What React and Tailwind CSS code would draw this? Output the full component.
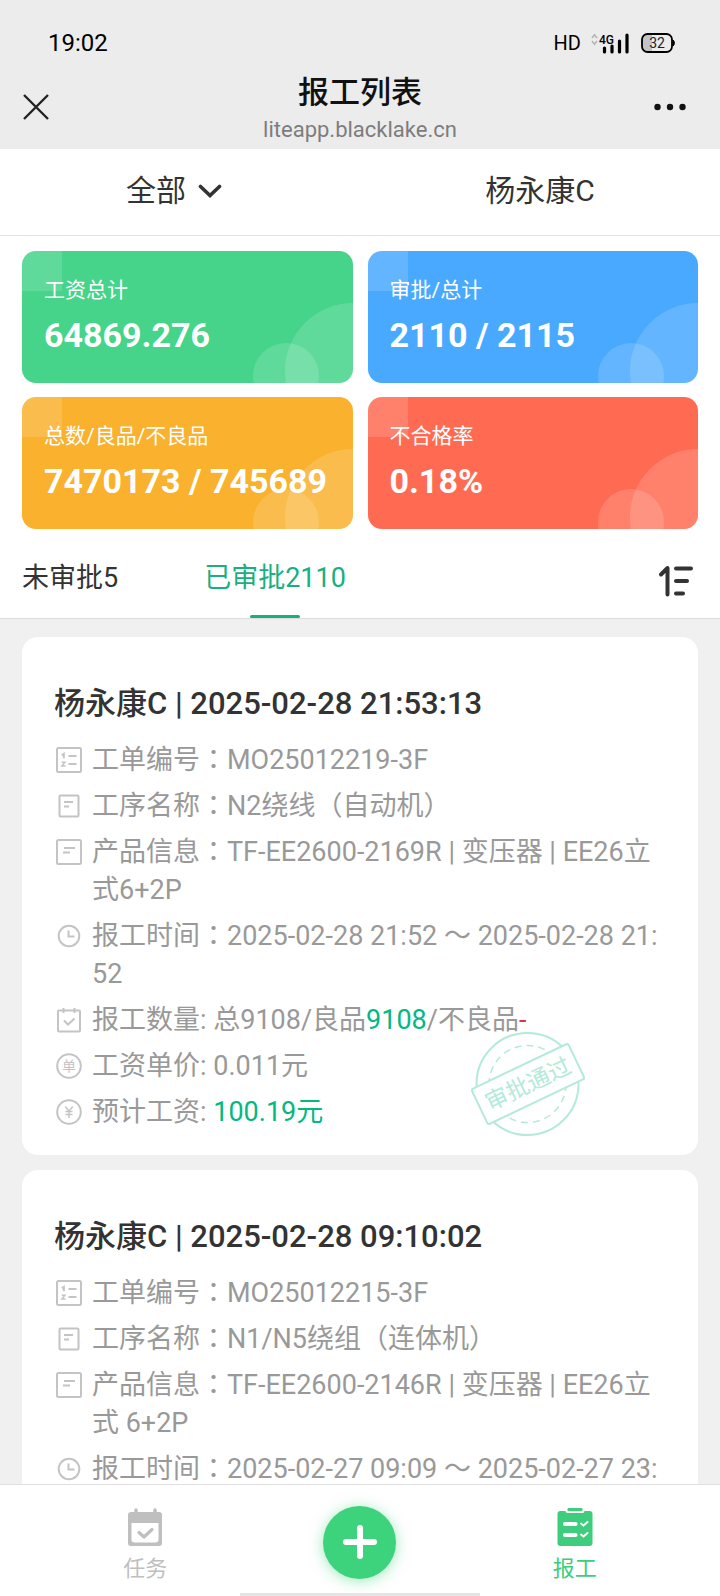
import React, { useState } from 'react';

const stats = [
  { label: '工资总计', value: '64869.276', color: 'bg-[#45d48a]' },
  { label: '审批/总计', value: '2110 / 2115', color: 'bg-[#48a9ff]' },
  { label: '总数/良品/不良品', value: '7470173 / 745689', color: 'bg-[#fab12d]' },
  { label: '不合格率', value: '0.18%', color: 'bg-[#ff6b52]' },
];

const tabs = [
  { id: 'pending', label: '未审批5' },
  { id: 'approved', label: '已审批2110' },
];

const reports = [
  {
    title: '杨永康C | 2025-02-28 21:53:13',
    order: 'MO25012219-3F',
    process: 'N2绕线（自动机）',
    product: 'TF-EE2600-2169R | 变压器 | EE26立式6+2P',
    time: '2025-02-28 21:52 ～ 2025-02-28 21:52',
    total: '9108',
    good: '9108',
    bad: '-',
    price: '0.011元',
    wage: '100.19元',
    approved: true,
  },
  {
    title: '杨永康C | 2025-02-28 09:10:02',
    order: 'MO25012215-3F',
    process: 'N1/N5绕组（连体机）',
    product: 'TF-EE2600-2146R | 变压器 | EE26立式 6+2P',
    time: '2025-02-27 09:09 ～ 2025-02-27 23:',
  },
];

// 26x26 line icons shown in front of each row
const rowIcons = {
  order: (
    <>
      <rect x="1" y="1" width="24" height="24" rx="1.5" strokeWidth="2" />
      <path d="M5.8 8.2 7.8 6.8v4.4M12.5 9h8M12.5 17h8" strokeWidth="2" />
      <path d="M5.8 15.2h3.2l-3.200 3.8h3.8" strokeWidth="1.4" />
    </>
  ),
  process: (
    <>
      <rect x="3.5" y="2.5" width="19" height="21" rx="1" strokeWidth="2" />
      <path d="M8 9h9M8 13.5h5" strokeWidth="2" />
    </>
  ),
  product: (
    <>
      <rect x="1" y="1" width="24" height="24" rx="1.5" strokeWidth="2" />
      <path d="M8 9h11M7 13.5h7" strokeWidth="2" />
    </>
  ),
  time: (
    <>
      <circle cx="13" cy="13" r="10.3" strokeWidth="2" />
      <path d="M12.5 7.5v6h6" strokeWidth="2" />
    </>
  ),
  count: (
    <>
      <rect x="2" y="3.5" width="22" height="21" rx="1" strokeWidth="2" />
      <path d="M7.5 1v5M18.5 1v5M8 13.5l4 4 6.5-6" strokeWidth="2" />
    </>
  ),
  price: (
    <>
      <circle cx="13" cy="13" r="11.8" strokeWidth="2" />
      <text x="13" y="18" fontSize="14" textAnchor="middle" fill="currentColor" stroke="none">单</text>
    </>
  ),
  wage: (
    <>
      <circle cx="13" cy="13" r="11.8" strokeWidth="2" />
      <path d="M9.2 7.5 13 12l3.8-4.5M13 12v7M9.5 12.5h7M9.5 15.5h7" strokeWidth="1.4" />
    </>
  ),
};

const StatusBar = () => (
  <div className="flex items-center justify-between pt-7 pr-[45px] pl-12 text-black">
    <span className="text-[24px] leading-[30px]">19:02</span>
    <div className="flex items-center">
      <span className="mr-2.5 text-[20px] leading-[30px]">HD</span>
      <svg width="38" height="22" viewBox="0 0 38 22" fill="none">
        <path d="M1 6 3.5 2.8 6 6M1 9 3.5 12.2 6 9" stroke="#b5b5b5" strokeWidth="1.6" />
        <text x="8" y="12" fontSize="12" fontWeight="500" fill="#000">4G</text>
        <path d="M13.5 16v4M21 14v6M28.5 9v11M36 3v17" stroke="#000" strokeWidth="3.2" strokeLinecap="round" />
      </svg>
      <svg className="ml-3" width="34" height="20" viewBox="0 0 34 20">
        <rect x="1" y="1" width="30" height="18" rx="5.5" fill="#ececec" />
        <path d="M6.5 1H11v18H6.5A5.5 5.5 0 0 1 1 13.5v-7A5.5 5.5 0 0 1 6.5 1z" fill="#c4c4c4" />
        <rect x="1" y="1" width="30" height="18" rx="5.5" fill="none" stroke="#000" strokeWidth="1.8" />
        <path d="M32 7c1.8 1 1.8 5 0 6z" fill="#000" stroke="#000" />
        <text x="16" y="15" fontSize="14" textAnchor="middle" fill="#222">32</text>
      </svg>
    </div>
  </div>
);

const NavBar = () => (
  <div className="flex items-center justify-between px-[22px] pt-3 pb-[5px]">
    <button className="w-12" aria-label="关闭">
      <svg width="28" height="28" viewBox="0 0 28 28" fill="none" stroke="#222" strokeWidth="2.4">
        <path d="M2 2l24 24M26 2 2 26" />
      </svg>
    </button>
    <div className="flex flex-col items-center">
      <h1 className="text-[31px] leading-[46px] font-medium text-[#111]">报工列表</h1>
      <p className="text-[22px] leading-7 text-[#7d7d7d]">liteapp.blacklake.cn</p>
    </div>
    <button className="flex w-12 justify-end" aria-label="更多">
      <svg className="mr-3 shrink-0" width="32" height="8" viewBox="0 0 32 8" fill="#111">
        <circle cx="3.5" cy="4" r="3.2" />
        <circle cx="16" cy="4" r="3.2" />
        <circle cx="28.5" cy="4" r="3.2" />
      </svg>
    </button>
  </div>
);

const StatCard = ({ label, value, color }) => (
  <div className={`relative overflow-hidden rounded-[14px] px-[22px] pt-6 pb-7 text-white ${color}`}>
    <div className="absolute top-0 left-0 h-10 w-10 bg-white/15" />
    <div className="absolute -right-[68px] -bottom-14 h-[136px] w-[136px] rounded-full bg-white/15" />
    <div className="absolute right-[34px] -bottom-[26px] h-[66px] w-[66px] rounded-full bg-white/15" />
    <p className="relative text-[21px] leading-[30px]">{label}</p>
    <p className="relative mt-2.5 text-[34px] leading-10 font-bold whitespace-nowrap">{value}</p>
  </div>
);

// full-width colon centred in its box
const WideColon = () => <span className="font-['Noto_Sans_CJK_TC',sans-serif] leading-none">：</span>;

const Row = ({ icon, children }) => (
  <div className="flex">
    <svg className="mt-1.5 mr-2.5 ml-0.5 shrink-0 text-[#c4c4c4]" width="26" height="26" viewBox="0 0 26 26" fill="none" stroke="currentColor">
      {rowIcons[icon]}
    </svg>
    <p className="min-w-0 flex-1 break-all">{children}</p>
  </div>
);

const Stamp = () => (
  <svg className="absolute right-[113px] bottom-[18px]" width="114" height="106" viewBox="0 0 114 106" fill="none" stroke="#b3ead8">
    <circle cx="56.5" cy="53" r="51" strokeWidth="2" />
    <circle cx="56.5" cy="53" r="38.5" strokeWidth="1.5" strokeDasharray="7 5" />
    <g transform="rotate(-25.5 57 53)">
      <rect x="3.5" y="33.5" width="107" height="39" rx="2" fill="#fff" strokeWidth="2" />
      <text x="57" y="61" fontSize="23" textAnchor="middle" fill="#b3ead8" stroke="none">审批通过</text>
    </g>
  </svg>
);

const ReportCard = ({ report }) => (
  <article className="relative rounded-2xl bg-white pt-[45px] pr-8 pb-6 pl-8">
    <h2 className="text-[31px] leading-[44px] font-medium text-[#333]">{report.title}</h2>
    <div className="mt-[15px] flex flex-col gap-2 text-[27px] leading-[38px] text-[#999]">
      <Row icon="order">工单编号<WideColon />{report.order}</Row>
      <Row icon="process">工序名称<WideColon />{report.process}</Row>
      <Row icon="product">产品信息<WideColon />{report.product}</Row>
      <Row icon="time">报工时间<WideColon />{report.time}</Row>
      {report.total && (
        <Row icon="count">
          报工数量: 总{report.total}/良品<span className="text-[#02b980]">{report.good}</span>/不良品
          <span className="text-[#d9363e]">{report.bad}</span>
        </Row>
      )}
      {report.price && <Row icon="price">工资单价: {report.price}</Row>}
      {report.wage && (
        <Row icon="wage">预计工资: <span className="text-[#02b980]">{report.wage}</span></Row>
      )}
    </div>
    {report.approved && <Stamp />}
  </article>
);

const BottomNav = () => (
  <nav className="relative border-t border-[#e0e0e0] bg-white px-[38px] pt-5 pb-[11px]">
    <div className="grid grid-cols-3 items-center justify-items-center">
      <button className="flex flex-col items-center pt-0.5 text-[22px] leading-8 text-[#bfbfbf]">
        <svg className="mb-1.5" width="36" height="40" viewBox="0 0 36 40" fill="none">
          <path d="M9 3v4M28 3v4" stroke="#bfbfbf" strokeWidth="3.5" strokeLinecap="round" />
          <rect x="1" y="5" width="34" height="34" rx="3" fill="#bfbfbf" />
          <path d="M4.5 16h27v16.500a3 3 0 0 1-3 3h-21a3 3 0 0 1-3-3z" fill="#fff" />
          <path d="M12 25.500l5 4.500 8-7.500" stroke="#bfbfbf" strokeWidth="3.2" strokeLinecap="round" strokeLinejoin="round" />
        </svg>
        任务
      </button>
      <button
        className="mb-1.5 flex h-[73px] w-[73px] items-center justify-center rounded-full bg-[#3dd37c] shadow-[0_2px_14px_rgba(61,211,124,0.5)]"
        aria-label="新增报工"
      >
        <svg width="34" height="34" viewBox="0 0 34 34" stroke="#fff" strokeWidth="6" strokeLinecap="round">
          <path d="M17 3v28M3 17h28" />
        </svg>
      </button>
      <button className="flex flex-col items-center pt-0.5 text-[22px] leading-8 text-[#3dcd7c]">
        <svg className="mb-1.5" width="36" height="40" viewBox="0 0 36 40" fill="none">
          <rect x="0.5" y="4" width="35" height="35" rx="3" fill="#3dcd7c" />
          <rect x="8.5" y="0" width="19" height="6" rx="2" fill="#fff" />
          <rect x="10.5" y="1" width="15" height="3.2" rx="1" fill="#3dcd7c" />
          <path d="M8 17h10.500M8 28h10.500" stroke="#fff" strokeWidth="4.2" strokeLinecap="round" />
          <path d="M24 16.500l2.500 2 4-3.500M24 27.500l2.500 2 4-3.500" stroke="#fff" strokeWidth="2" strokeLinecap="round" />
        </svg>
        报工
      </button>
    </div>
    {/* Home indicator */}
    <div className="absolute bottom-0 left-1/2 h-[3px] w-1/3 -translate-x-1/2 bg-[#e4e4e4]" />
  </nav>
);

const App = () => {
  const [activeTab, setActiveTab] = useState('approved');

  return (
    <div className="flex h-dvh flex-col bg-[#f0f0f0] font-[Roboto,'Noto_Sans_CJK_SC',sans-serif]">
      {/* Header */}
      <header className="bg-[#ececec]">
        <StatusBar />
        <NavBar />
      </header>

      {/* Filters */}
      <div className="grid grid-cols-2 border-b border-[#e4e4e4] bg-white text-[30px] leading-[44px] text-[#333]">
        <button className="flex items-center justify-center gap-3 pt-5 pr-3 pb-[22px]">
          全部
          <svg width="24" height="14" viewBox="0 0 24 14" fill="none" stroke="#333" strokeWidth="3.6" strokeLinecap="round">
            <path d="M2.5 2.5 12 11.5l9.5-9" />
          </svg>
        </button>
        <button className="pt-5 pb-[22px]">杨永康C</button>
      </div>

      {/* Totals */}
      <section className="grid grid-cols-2 gap-x-[15px] gap-y-[14px] bg-white px-[22px] pt-[15px]">
        {stats.map((stat) => (
          <StatCard key={stat.label} {...stat} />
        ))}
      </section>

      {/* Approval tabs */}
      <div className="flex items-center justify-between border-b border-[#dcdcdc] bg-white px-[22px]">
        <div className="flex gap-[86px]">
          {tabs.map((tab) => (
            <button
              key={tab.id}
              className={`flex flex-col items-center text-[27px] leading-[38px] ${activeTab === tab.id ? 'text-[#1aaf80]' : 'text-[#333]'}`}
              onClick={() => setActiveTab(tab.id)}
            >
              <span className="pt-[30px] pb-[18px]">{tab.label}</span>
              <span className={`h-[3px] w-[50px] rounded-full ${activeTab === tab.id ? 'bg-[#1aaf80]' : ''}`} />
            </button>
          ))}
        </div>
        <button className="pt-[14px] pr-1" aria-label="排序">
          <svg width="36" height="32" viewBox="0 0 36 32" fill="none" stroke="#333" strokeWidth="4" strokeLinecap="round" strokeLinejoin="round">
            <path d="M3 9.5 9.500 3v26.500M18 3.500h15M18 16h11M18 28.500h7" />
          </svg>
        </button>
      </div>

      {/* Report list */}
      <main className="flex min-h-0 flex-1 flex-col gap-[15px] overflow-y-auto px-[22px] pt-[18px] [scrollbar-width:none]">
        {reports.map((report) => (
          <ReportCard key={report.title} report={report} />
        ))}
      </main>

      <BottomNav />
    </div>
  );
};

export default App;
